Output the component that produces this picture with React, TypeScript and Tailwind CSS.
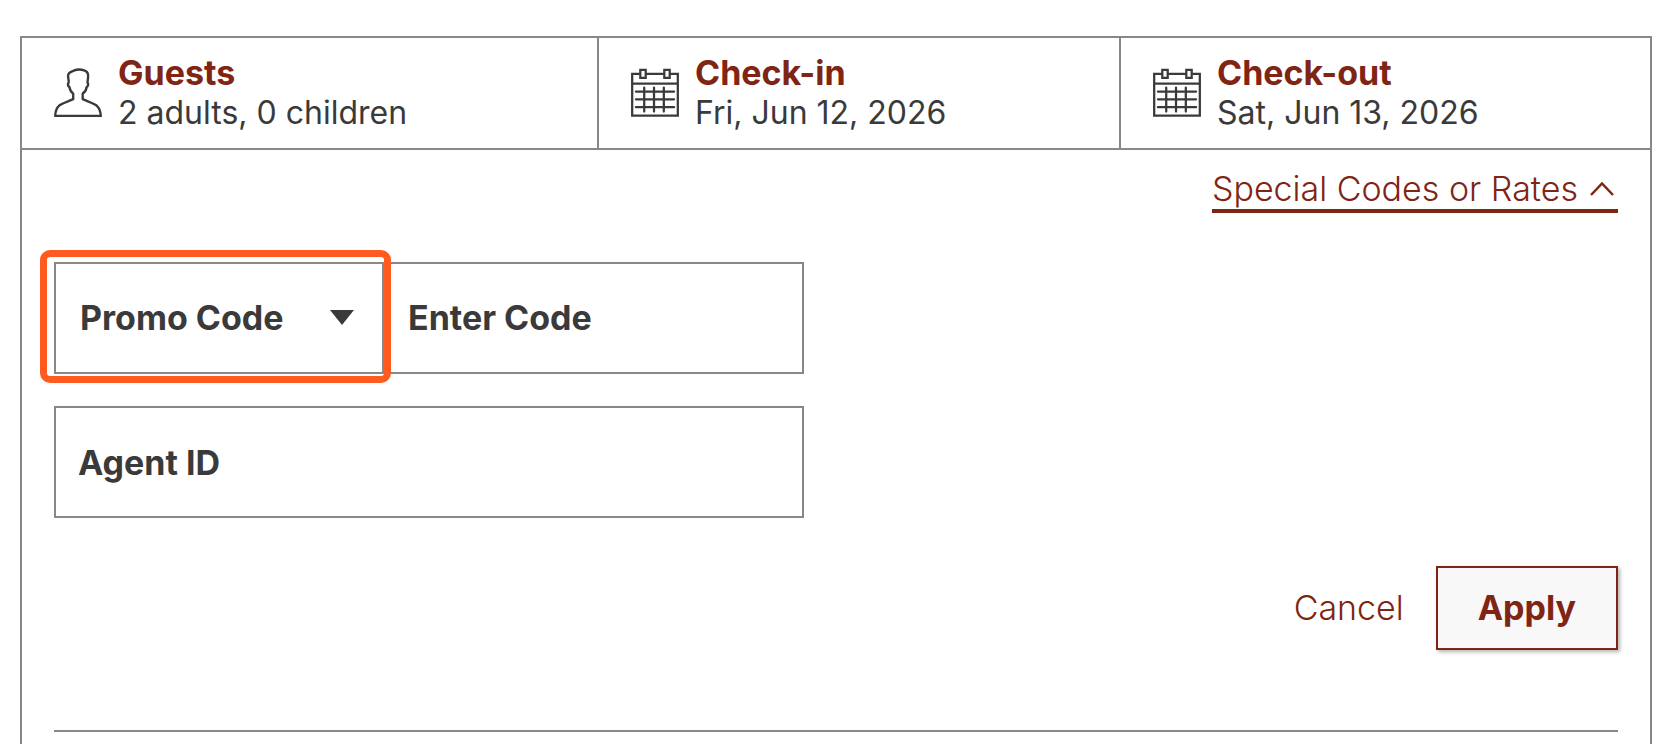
import { useState } from 'react'

function GuestIcon() {
  return (
    <svg
      aria-hidden="true"
      viewBox="0 0 49 50"
      className="h-[50px] w-12 shrink-0"
      fill="none"
      stroke="currentColor"
      strokeWidth="2.400"
      strokeLinejoin="round"
    >
      <path d="M1.2 48.4H47.8C47.6 44.5 46.6 40.4 43.5 37.8C39.8 35 34.500 33.800 29.300 31.300V25.600C31.600 24 33 21.800 33.200 19.200C34.800 18 35.200 16 34.200 14.200C34.400 11.600 35 9.400 34.800 6.600C34.600 4 33.400 2.800 31.400 2.200C27.600 0.800 22 0.800 18.400 3C15.600 4 14.200 5.400 14.400 8C14.500 10.200 15.200 12 15 14.200C13.900 16 14.200 18 15.900 19.200C16.200 21.800 17.400 24 19.600 25.600V31.300C14.400 33.800 9 35 5.300 37.800C2.300 40.400 1.300 44.500 1.200 48.400Z" />
    </svg>
  )
}

function CalendarIcon() {
  return (
    <svg
      aria-hidden="true"
      viewBox="0 0 49 50"
      className="h-[50px] w-12 shrink-0"
      fill="none"
      stroke="currentColor"
      strokeWidth="2.300"
    >
      <path d="M9 5.500H1.200V48H47.800V5.500H40M15.500 5.500H33.500" />
      <path d="M9.500 1.500H15V9.500H9.500ZM34 1.500H39.500V9.500H34Z" />
      <path d="M1 15.500H48" />
      <path strokeLinecap="round" d="M5 23.500H44M5 31.500H44M5 39.500H44M13.500 19.500V44M23.500 19.500V44M33.500 19.500V44" />
    </svg>
  )
}

const stays = [
  { label: 'Guests', value: '2 adults, 0 children', icon: GuestIcon },
  { label: 'Check-in', value: 'Fri, Jun 12, 2026', icon: CalendarIcon },
  { label: 'Check-out', value: 'Sat, Jun 13, 2026', icon: CalendarIcon },
]

export default function App() {
  const [open, setOpen] = useState(true)
  const [codeType, setCodeType] = useState('promo')
  const [code, setCode] = useState('')
  const [agentId, setAgentId] = useState('')

  const reset = () => {
    setCodeType('promo')
    setCode('')
    setAgentId('')
    setOpen(false)
  }

  return (
    <main className="flex min-h-screen flex-col bg-white pt-9 pr-3 pl-5 font-['Inter',sans-serif] text-[34px] leading-10 text-[#3a3a3a]">
      <div className="flex-1 border-2 border-b-0 border-[#888888]">
        <div className="grid grid-cols-[577fr_522fr_529fr] border-b-2 border-[#888888]">
          {stays.map(({ label, value, icon: Icon }) => (
            <button
              key={label}
              type="button"
              className="flex items-center gap-4 border-r-2 border-[#888888] py-[15px] pl-8 text-left last:border-r-0"
            >
              <Icon />
              <span className="block">
                <span className="block font-bold text-[#802414]">{label}</span>
                <span className="block text-[32px]">{value}</span>
              </span>
            </button>
          ))}
        </div>

        <div className="px-8 pt-[19px]">
          <div className="flex justify-end">
            <button
              type="button"
              aria-expanded={open}
              onClick={() => setOpen(!open)}
              className="flex items-center gap-3 border-b-4 border-[#802414] pr-1 font-light text-[#802414]"
            >
              Special Codes or Rates
              <svg
                aria-hidden="true"
                viewBox="0 0 24 14"
                className="h-[14px] w-6"
                fill="none"
                stroke="currentColor"
                strokeWidth="2.500"
              >
                <path d={open ? 'M1 13L12 1.500L23 13' : 'M1 1L12 12.500L23 1'} />
              </svg>
            </button>
          </div>

          {open && (
            <form onSubmit={(e) => e.preventDefault()} className="mt-[49px]">
              <div className="flex w-[750px] max-w-full flex-col gap-8 font-bold">
                <div className="flex h-28 border-2 border-[#888888]">
                  <div className="relative w-[328px] shrink-0 border-r-2 border-[#888888]">
                    <select
                      aria-label="Code type"
                      value={codeType}
                      onChange={(e) => setCodeType(e.target.value)}
                      className="h-full w-full appearance-none bg-transparent pl-6 outline-none"
                    >
                      <option value="promo">Promo Code</option>
                      <option value="group">Group Code</option>
                      <option value="corporate">Corporate Code</option>
                    </select>
                    <svg
                      aria-hidden="true"
                      viewBox="0 0 24 15"
                      className="pointer-events-none absolute top-[46px] right-7 h-[15px] w-6"
                      fill="currentColor"
                    >
                      <path d="M0 0H24L12 15Z" />
                    </svg>
                    {/* highlight ring around the code type */}
                    <div className="pointer-events-none absolute -top-[14px] -right-[9px] -bottom-[11px] -left-4 rounded-[10px] border-[7px] border-[#ff5a1f]" />
                  </div>
                  <input
                    type="text"
                    aria-label="Enter Code"
                    placeholder="Enter Code"
                    value={code}
                    onChange={(e) => setCode(e.target.value)}
                    className="min-w-0 flex-1 px-6 outline-none placeholder:text-[#3a3a3a] placeholder:opacity-100"
                  />
                </div>
                <input
                  type="text"
                  aria-label="Agent ID"
                  placeholder="Agent ID"
                  value={agentId}
                  onChange={(e) => setAgentId(e.target.value)}
                  className="h-28 border-2 border-[#888888] px-[22px] outline-none placeholder:text-[#3a3a3a] placeholder:opacity-100"
                />
              </div>

              <div className="mt-12 flex items-center justify-end gap-8 text-[#802414]">
                <button type="button" onClick={reset} className="font-light">
                  Cancel
                </button>
                <button
                  type="submit"
                  className="border-2 border-[#802414] bg-[#f8f8f8] px-10 py-5 font-bold shadow-[2px_2px_4px_rgba(0,0,0,0.3)]"
                >
                  Apply
                </button>
              </div>
            </form>
          )}

          <hr className="mt-20 border-t-2 border-[#888888]" />
        </div>
      </div>
    </main>
  )
}
